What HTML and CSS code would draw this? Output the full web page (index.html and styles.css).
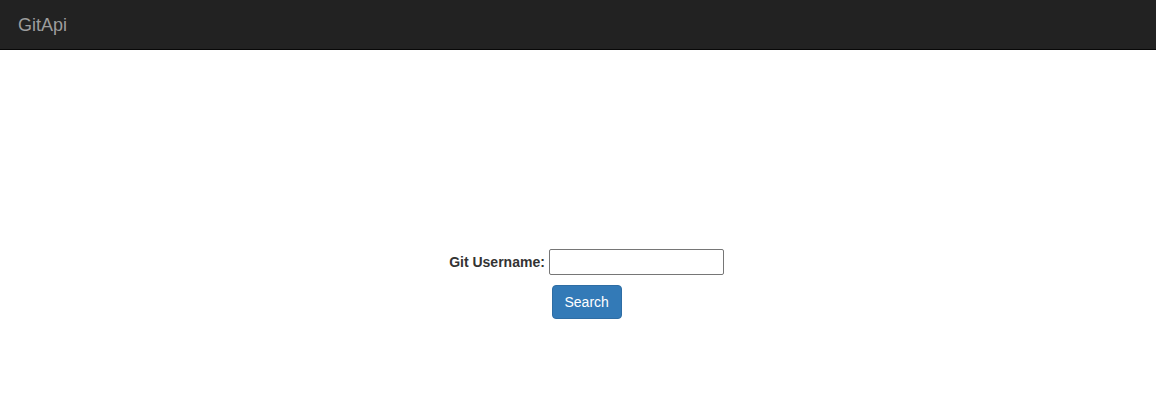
FILE: index.html
```html
<!DOCTYPE html>
<html>
<head>
<meta charset="utf-8">
<link rel="stylesheet" href="styles.css">
</head>
<body>
<nav class="navbar"><a class="brand" href="#">GitApi</a></nav>
<main class="content">
  <form class="search-form">
    <div class="row">
      <label class="label" for="user">Git Username:</label>
      <input class="input" id="user" type="text">
    </div>
    <div class="row">
      <button class="btn" type="button">Search</button>
    </div>
  </form>
</main>
</body>
</html>
```
FILE: styles.css
```css
html, body { margin: 0; padding: 0; background: #fff; }
body { font-family: "Liberation Sans", Arial, sans-serif; font-size: 14px; color: #333; }
.navbar {
  height: 49px;
  background: #222;
  border-bottom: 1px solid #080808;
  display: flex;
  align-items: center;
}
.brand {
  padding-left: 18px;
  font-size: 18px;
  color: #9d9d9d;
  text-decoration: none;
  line-height: 20px;
}
.content {
  padding-top: 199px;
  padding-left: 17px;
}
.search-form { display: flex; flex-direction: column; align-items: center; gap: 10px; }
.row { display: flex; align-items: center; gap: 4px; }
.label { font-weight: bold; font-size: 14px; color: #333; }
.input {
  box-sizing: border-box;
  width: 175px;
  height: 26px;
  border: 1px solid #767676;
  border-radius: 2px;
  margin: 0;
  padding: 1px 2px;
}
.btn {
  box-sizing: border-box;
  height: 34px;
  width: 70px;
  background: #337ab7;
  border: 1px solid #2e6da4;
  border-radius: 4px;
  color: #fff;
  font-family: "Liberation Sans", Arial, sans-serif;
  font-size: 14px;
  padding: 6px 12px;
}
```
